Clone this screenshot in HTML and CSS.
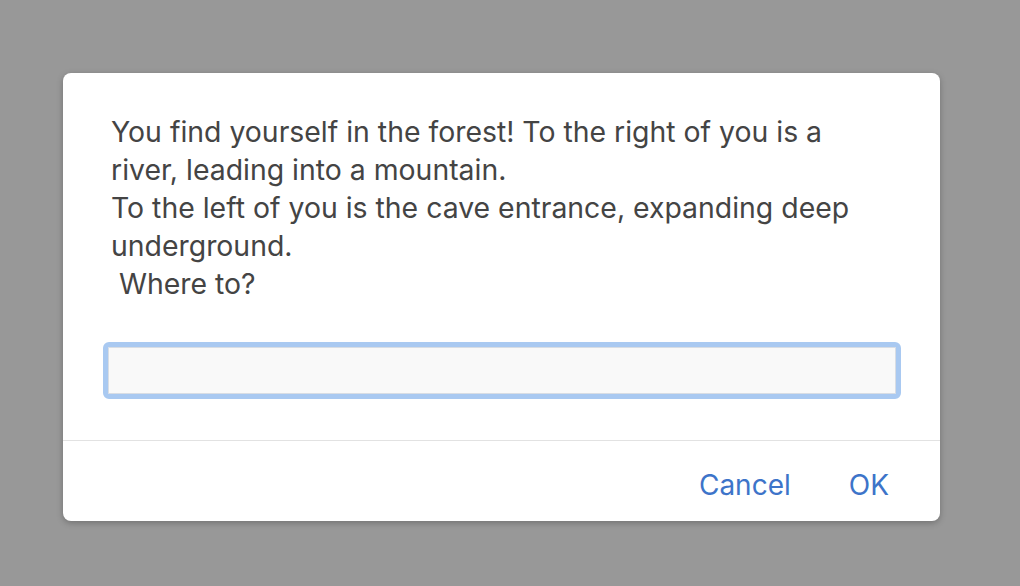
FILE: index.html
```html
<!DOCTYPE html>
<html>
<head>
<meta charset="utf-8">
<link rel="stylesheet" href="styles.css">
</head>
<body>
<div class="dialog">
  <div class="content">
    <p class="message">You find yourself in the forest! To the right of you is a river, leading into a mountain.<br>To the left of you is the cave entrance, expanding deep underground.<br>&nbsp;Where to?</p>
    <input class="answer" type="text">
  </div>
  <div class="footer">
    <button class="btn">Cancel</button>
    <button class="btn">OK</button>
  </div>
</div>
</body>
</html>
```
FILE: styles.css
```css
html, body {
  margin: 0;
  padding: 0;
}
body {
  background: #989898;
  width: 1020px;
  height: 586px;
  padding: 73px 0 0 63px;
  box-sizing: border-box;
  font-family: Inter, "Liberation Sans", sans-serif;
}
.dialog {
  width: 877px;
  height: 448px;
  background: #fff;
  border-radius: 8px;
  box-shadow: 0 2px 6px rgba(0,0,0,0.25);
  display: flex;
  flex-direction: column;
  box-sizing: border-box;
}
.content {
  padding: 40px 40px 0 40px;
  height: 368px;
  box-sizing: border-box;
  border-bottom: 1px solid #e2e2e2;
}
.message {
  margin: 0 0 39px 8px;
  font-size: 28.4px;
  line-height: 38px;
  color: #444;
  width: 770px;
}
.answer {
  display: block;
  width: 798px;
  height: 57px;
  box-sizing: border-box;
  border: 5px solid #a9c9f1;
  border-radius: 6px;
  background: #f9f9f9;
  box-shadow: inset 0 0 0 1px #d8dde4;
  outline: none;
  margin: 0;
  padding: 0 10px;
}
.footer {
  flex: 1;
  display: flex;
  justify-content: flex-end;
  align-items: center;
  gap: 58px;
  padding: 8px 51px 0 0;
}
.btn {
  background: none;
  border: none;
  padding: 0;
  font-family: Inter, "Liberation Sans", sans-serif;
  font-size: 28px;
  color: #3d74c9;
  cursor: pointer;
}
```
